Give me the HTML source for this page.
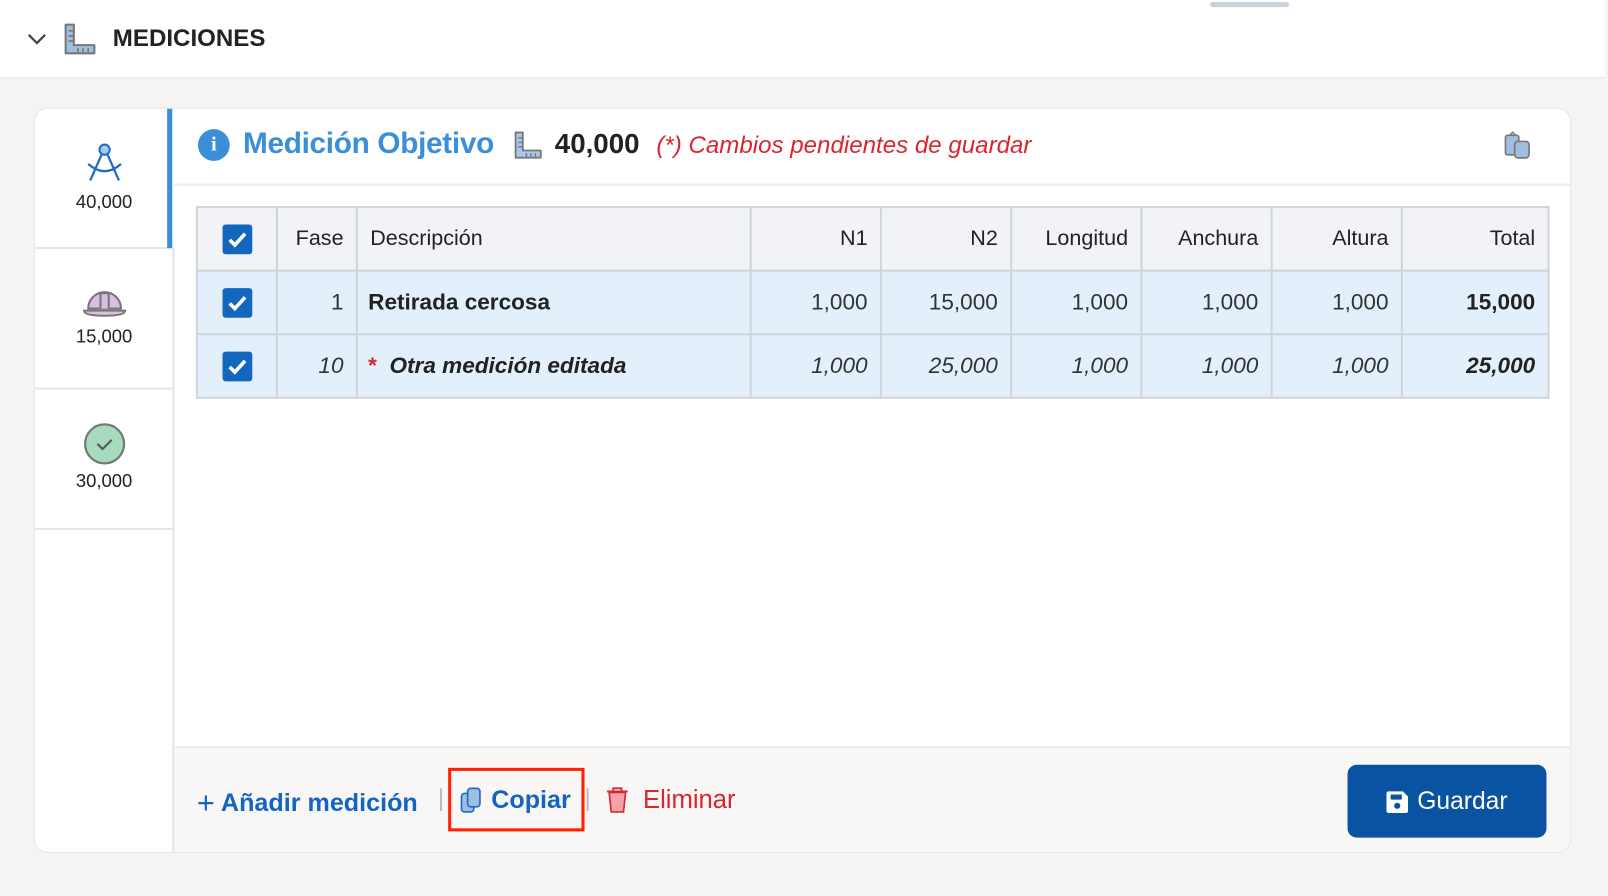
<!DOCTYPE html>
<html><head><meta charset="utf-8"><style>
*{box-sizing:border-box;margin:0;padding:0}
html,body{width:1608px;height:896px;overflow:hidden;background:#f5f4f2;font-family:"Liberation Sans",Arial,sans-serif;color:#222}
#w{position:absolute;left:0;top:0;width:1568px;height:874px;transform:scale(1.02551,1.02517);transform-origin:0 0;background:#f5f4f2}
.a{position:absolute}
.hdr{left:0;top:0;width:1565px;height:77px;background:#fff;border-bottom:2px solid #ececec}
.card{left:33px;top:105px;width:1499px;height:727px;background:#fff;border:1px solid #e6e6e6;border-radius:14px;overflow:hidden}
table{border-collapse:collapse;position:absolute;left:157px;top:95px;width:1320px;font-size:22px}
td{border:2px solid #d0d4dc;height:62px;padding:0 12px;text-align:right;color:#333}
tr.h td{background:#f2f3f7;color:#222;font-size:21px}
tr.r td{background:#e3effa}
.cb{display:inline-block;width:29px;height:29px;background:#1266bd;border-radius:3px;vertical-align:middle}
.tab{position:absolute;left:0;width:135px;height:137px;border-bottom:2px solid #e3e5ea;text-align:center;font-size:18px;color:#222}
</style></head><body><div id="w">
<div class="a hdr"></div>
<div class="a" style="left:1180px;top:2px;width:77px;height:5px;background:#c9d1dc;border-radius:3px"></div>
<svg class="a" style="left:26px;top:30px" width="20" height="16" viewBox="0 0 20 16"><path d="M2 4l8 8 8-8" fill="none" stroke="#444" stroke-width="2.2"/></svg>
<svg class="a" style="left:62px;top:22px" width="33" height="32" viewBox="0 0 33 32"><path d="M2 2h8v20h20v8H2z" fill="#9fbfe0" stroke="#777" stroke-width="2" stroke-linejoin="round"/><path d="M5 8h4M5 13h4M5 18h4M14 29v-4M19 29v-4M24 29v-4" stroke="#777" stroke-width="1.6"/></svg>
<div class="a" style="left:110px;top:24px;font-size:23.5px;font-weight:bold;color:#222">MEDICIONES</div>

<div class="a card">
 <div class="tab" style="top:0;border-right:none"><svg style="margin-top:32px" width="40" height="42" viewBox="0 0 40 42"><circle cx="20" cy="8" r="5" fill="#a8c8ec" stroke="#1f6cc0" stroke-width="2"/><path d="M17 13L6 38M23 13l11 25M4 22q16 14 32 0" fill="none" stroke="#1f6cc0" stroke-width="2.2"/></svg><div style="margin-top:2px">40,000</div></div>
 <div class="a" style="left:129px;top:0;width:5px;height:136px;background:#3a8ee0"></div>
 <div class="tab" style="top:137px"><svg style="margin-top:34px" width="44" height="36" viewBox="0 0 44 36"><path d="M6 24a16 16 0 0 1 32 0z" fill="#d9c0e3" stroke="#777" stroke-width="2"/><path d="M18 24V9h8v15" fill="#d9c0e3" stroke="#777" stroke-width="2"/><path d="M2 26h40q0 5-20 5T2 26z" fill="#d9c0e3" stroke="#777" stroke-width="2"/></svg><div>15,000</div></div>
 <div class="tab" style="top:274px"><svg style="margin-top:32px" width="42" height="42" viewBox="0 0 42 42"><circle cx="21" cy="21" r="19" fill="#a6dcbd" stroke="#777" stroke-width="2.2"/><path d="M14 21l5 5 9-9" fill="none" stroke="#555" stroke-width="2"/></svg><div>30,000</div></div>
 <div class="a" style="left:134px;top:136px;width:2px;height:600px;background:#e3e5ea"></div>
 <div class="a" style="left:136px;top:73px;width:1370px;height:2px;background:#ececec"></div>
 <div class="a" style="left:159px;top:20px;width:31px;height:31px;border-radius:50%;background:#3a8fd8;color:#fff;font-weight:bold;font-size:20px;text-align:center;line-height:31px;font-family:'Liberation Serif',serif">i</div>
 <div class="a" style="left:203px;top:18px;font-size:29px;font-weight:bold;color:#3a8fd8;letter-spacing:-0.3px">Medición Objetivo</div>
 <svg class="a" style="left:467px;top:21px" width="29" height="29" viewBox="0 0 33 32"><path d="M2 2h8v20h20v8H2z" fill="#a8c8ec" stroke="#777" stroke-width="2" stroke-linejoin="round"/><path d="M5 8h4M5 13h4M5 18h4M14 29v-4M19 29v-4M24 29v-4" stroke="#777" stroke-width="1.6"/></svg>
 <div class="a" style="left:507px;top:19px;font-size:27px;font-weight:bold;color:#222">40,000</div>
 <div class="a" style="left:606px;top:22px;font-size:23.5px;font-style:italic;color:#d8262f">(*) Cambios pendientes de guardar</div>
 <svg class="a" style="left:1432px;top:22px" width="28" height="28" viewBox="0 0 28 28"><rect x="2" y="4" width="13" height="19" rx="2" fill="#9fbfe0" stroke="#777" stroke-width="1.6"/><path d="M6 4l3-3 3 3" fill="none" stroke="#777" stroke-width="1.5"/><rect x="11" y="10" width="14" height="16" rx="3" fill="#9fbfe0" stroke="#777" stroke-width="1.6"/></svg>
 <table>
 <tr class="h"><td style="width:78px;text-align:center"><span class="cb"><svg width="29" height="29" viewBox="0 0 29 29"><path d="M7 15l5 5 10-11" fill="none" stroke="#fff" stroke-width="3.5"/></svg></span></td><td style="width:78px">Fase</td><td style="width:384px;text-align:left">Descripción</td><td style="width:127px">N1</td><td style="width:127px">N2</td><td style="width:127px">Longitud</td><td style="width:127px">Anchura</td><td style="width:127px">Altura</td><td>Total</td></tr>
 <tr class="r"><td style="text-align:center"><span class="cb"><svg width="29" height="29" viewBox="0 0 29 29"><path d="M7 15l5 5 10-11" fill="none" stroke="#fff" stroke-width="3.5"/></svg></span></td><td>1</td><td style="text-align:left;font-weight:bold;color:#222;padding-left:10px">Retirada cercosa</td><td>1,000</td><td>15,000</td><td>1,000</td><td>1,000</td><td>1,000</td><td style="font-weight:bold;color:#222">15,000</td></tr>
 <tr class="r" style="font-style:italic"><td style="text-align:center"><span class="cb"><svg width="29" height="29" viewBox="0 0 29 29"><path d="M7 15l5 5 10-11" fill="none" stroke="#fff" stroke-width="3.5"/></svg></span></td><td>10</td><td style="text-align:left;font-weight:bold;color:#222;padding-left:10px"><span style="color:#d8262f;font-style:normal">*</span>&nbsp; Otra medición editada</td><td>1,000</td><td>25,000</td><td>1,000</td><td>1,000</td><td>1,000</td><td style="font-weight:bold;color:#222">25,000</td></tr>
 </table>
 <div class="a" style="left:136px;top:622px;width:1370px;height:110px;background:#f8f7f5;border-top:2px solid #ebebeb"></div>
 <div class="a" style="left:158px;top:659px;font-size:24.5px;font-weight:bold;color:#1565c0"><span style="font-weight:normal;font-size:30px;position:relative;top:2px">+</span> Añadir medición</div>
 <div class="a" style="left:395px;top:663px;width:2px;height:22px;background:#bbb"></div>
 <div class="a" style="left:403px;top:643px;width:133px;height:62px;border:3px solid #ff2200"></div>
 <svg class="a" style="left:414px;top:661px" width="24" height="28" viewBox="0 0 24 28"><rect x="2" y="7" width="12" height="18" rx="3" fill="#9fbfe0" stroke="#1f6cc0" stroke-width="1.6"/><rect x="8" y="2" width="12" height="18" rx="3" fill="#9fbfe0" stroke="#1f6cc0" stroke-width="1.6"/></svg>
 <div class="a" style="left:445px;top:661px;font-size:24.5px;font-weight:bold;color:#1565c0">Copiar</div>
 <div class="a" style="left:538px;top:663px;width:2px;height:22px;background:#bbb"></div>
 <svg class="a" style="left:556px;top:660px" width="24" height="28" viewBox="0 0 24 28"><path d="M2 6h20M8 6V3h8v3" fill="none" stroke="#d8262f" stroke-width="1.8"/><path d="M4 7l2 19h12l2-19z" fill="#f6a0aa" stroke="#d8262f" stroke-width="1.6"/></svg>
 <div class="a" style="left:593px;top:660px;font-size:25px;color:#d8262f">Eliminar</div>
 <div class="a" style="left:1280px;top:640px;width:194px;height:71px;background:#0a52a2;border-radius:9px;color:#fff;font-size:24px;line-height:71px"><svg style="position:absolute;left:37px;top:25px" width="23" height="23" viewBox="0 0 23 23"><path d="M3 1h14l5 5v14a2 2 0 0 1-2 2H3a2 2 0 0 1-2-2V3a2 2 0 0 1 2-2z" fill="#fff"/><rect x="5" y="4" width="11" height="5" rx="1" fill="#0a52a2"/><circle cx="11.5" cy="15" r="3" fill="#0a52a2"/></svg><span style="position:absolute;left:68px">Guardar</span></div>
</div>
</div></body></html>
